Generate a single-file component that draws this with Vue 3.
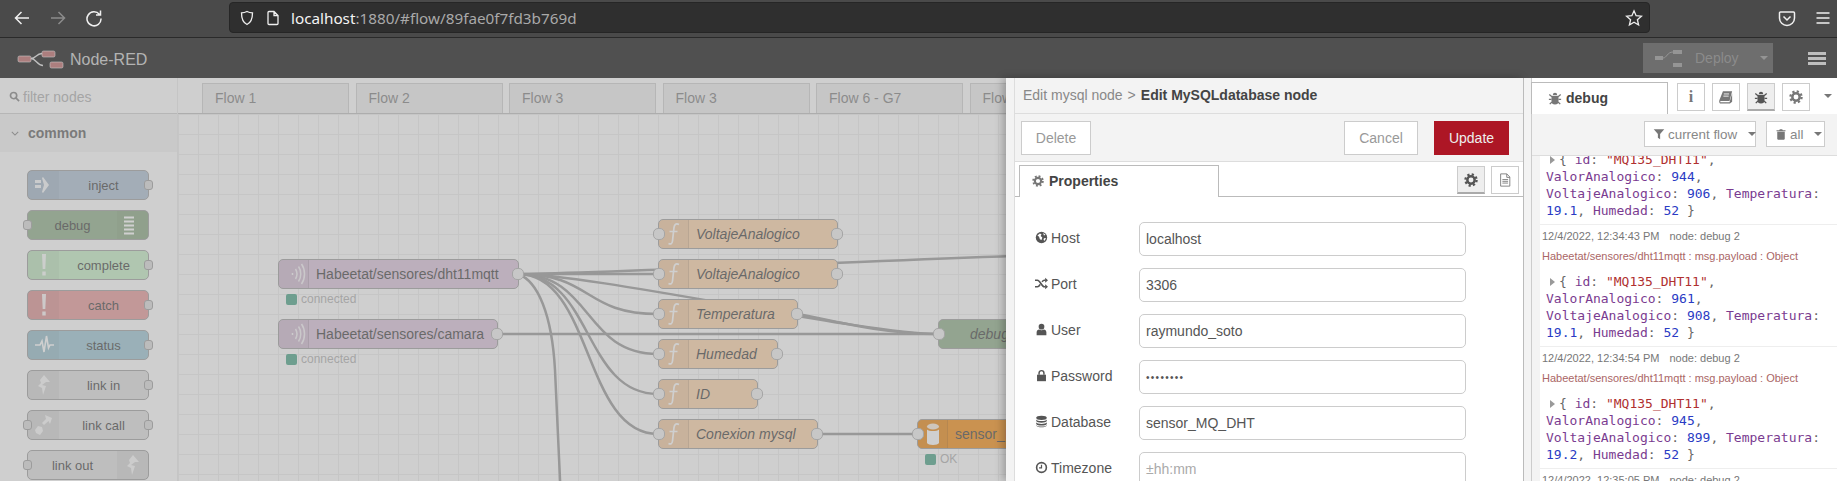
<script setup>
const OX = 178
const OY = 114

const paletteNodes = [
  { label: 'inject', color: '#a6bbcf', icon: 'inject', out: true },
  { label: 'debug', color: '#87a980', icon: 'lines', input: true, right: true },
  { label: 'complete', color: '#c0edc0', icon: 'bang', out: true },
  { label: 'catch', color: '#e49191', icon: 'bang', out: true },
  { label: 'status', color: '#94c1d0', icon: 'pulse', out: true },
  { label: 'link in', color: '#dddddd', icon: 'link', out: true },
  { label: 'link call', color: '#dddddd', icon: 'linkcall', input: true, out: true },
  { label: 'link out', color: '#dddddd', icon: 'link', input: true, right: true }
]

const flowTabs = ['Flow 1', 'Flow 2', 'Flow 3', 'Flow 3', 'Flow 6 - G7', 'Flow']

const fn = '#fdd0a2'
const mq = '#d8bfd8'
const canvasNodes = [
  { label: 'Habeetat/sensores/dht11mqtt', x: 278, y: 259, w: 241, color: mq, icon: 'wave', out: true, status: 'connected' },
  { label: 'Habeetat/sensores/camara', x: 278, y: 319, w: 220, color: mq, icon: 'wave', out: true, status: 'connected' },
  { label: 'VoltajeAnalogico', x: 658, y: 219, w: 180, color: fn, icon: 'fn', input: true, out: true, italic: true },
  { label: 'VoltajeAnalogico', x: 658, y: 259, w: 180, color: fn, icon: 'fn', input: true, out: true, italic: true },
  { label: 'Temperatura', x: 658, y: 299, w: 140, color: fn, icon: 'fn', input: true, out: true, italic: true },
  { label: 'Humedad', x: 658, y: 339, w: 120, color: fn, icon: 'fn', input: true, out: true, italic: true },
  { label: 'ID', x: 658, y: 379, w: 100, color: fn, icon: 'fn', input: true, out: true, italic: true },
  { label: 'Conexion mysql', x: 658, y: 419, w: 160, color: fn, icon: 'fn', input: true, out: true, italic: true },
  { label: 'debug 2', x: 938, y: 319, w: 140, color: '#87a980', input: true, italic: true, textLeft: 31 },
  { label: 'sensor_MQ_DHT', x: 917, y: 419, w: 180, color: '#f58500', icon: 'db', input: true, status: 'OK' }
]

const wire = (x1, y1, x2, y2) => {
  const a = [x1 - OX, y1 - OY]
  const b = [x2 - OX, y2 - OY]
  return `M${a[0]} ${a[1]} C${a[0] + 75} ${a[1]} ${b[0] - 75} ${b[1]} ${b[0]} ${b[1]}`
}
const rel = (pts) => pts.map(([x, y]) => `${x - OX} ${y - OY}`)
const [t0, t1, t2, t3] = rel([[798, 314], [830, 320], [880, 334], [938, 334]])
const [v0, v1, v2, v3, v4, v5, v6] = rel([[518, 274], [538, 281], [552, 315], [555, 370], [557, 410], [559, 450], [560.5, 490]])
const wires = [
  wire(518, 274, 658, 274),
  wire(518, 274, 658, 314),
  wire(518, 274, 658, 354),
  wire(518, 274, 658, 394),
  wire(518, 274, 658, 434),
  wire(518, 274, 938, 334),
  wire(498, 334, 938, 334),
  `M${t0} C${t1} ${t2} ${t3}`,
  wire(518, 274, 1200, 250),
  wire(818, 434, 917, 434),
  `M${v0} C${v1} ${v2} ${v3} C${v4} ${v5} ${v6}`
]

const formRows = [
  { label: 'Host', icon: 'globe', value: 'localhost' },
  { label: 'Port', icon: 'random', value: '3306' },
  { label: 'User', icon: 'user', value: 'raymundo_soto' },
  { label: 'Password', icon: 'lock', value: '••••••••', password: true },
  { label: 'Database', icon: 'database', value: 'sensor_MQ_DHT' },
  { label: 'Timezone', icon: 'clock', value: '±hh:mm', placeholder: true }
]

const messages = [
  { time: '12/4/2022, 12:34:43 PM', val: 961, volt: 908, temp: '19.1' },
  { time: '12/4/2022, 12:34:54 PM', val: 945, volt: 899, temp: '19.2' }
]
</script>

<template>
  <div class="page">
    <svg class="sprite" aria-hidden="true">
      <symbol id="i-gear" viewBox="0 0 16 16">
        <circle cx="8" cy="8" r="4.2" fill="none" stroke="currentColor" stroke-width="2.8" />
        <circle cx="8" cy="8" r="6.4" fill="none" stroke="currentColor" stroke-width="2.6" stroke-dasharray="2.5 2.53" />
      </symbol>
      <symbol id="i-bug" viewBox="0 0 16 16">
        <path d="M5 5.5h6l1 1v5a4 4 0 0 1-8 0v-5z M5.5 4.5a2.5 2.5 0 0 1 5 0z" fill="currentColor" />
        <path d="M1.5 4 4.5 6.5M14.5 4l-3 2.5M1 9.5h3M15 9.5h-3M2 15l2.5-2.5M14 15l-2.5-2.5" stroke="currentColor" stroke-width="1.5" fill="none" />
      </symbol>
      <symbol id="i-book" viewBox="0 0 16 16">
        <path d="M4.5 1.5H15l-3 11H2.5C1.3 12.5 1 13 1.500 14h10.500L15 4v9.500L12.500 15.500H2C.5 15.500-.2 13.500.5 11.500z" fill="currentColor" />
        <path d="M5.500 4.500h6M5 7h6" stroke="#fff" stroke-width="1" />
      </symbol>
      <symbol id="i-doc" viewBox="0 0 16 16">
        <path d="M3 1h7l3.500 3.500V15H3zM10 1v4h3.500M5 7.500h6.500M5 9.500h6.500M5 11.500h6.500" fill="none" stroke="currentColor" stroke-width="1" />
      </symbol>
      <symbol id="i-filter" viewBox="0 0 16 16">
        <path d="M1 1.500h14L9.500 8v7l-3-2V8z" fill="currentColor" />
      </symbol>
      <symbol id="i-trash" viewBox="0 0 16 16">
        <path d="M3 5h10v9.500l-1 1H4l-1-1zM2 3h3.500l1-1.500h3L10.500 3H14v1.300H2z" fill="currentColor" />
      </symbol>
      <symbol id="i-globe" viewBox="0 0 16 16">
        <circle cx="8" cy="8" r="7" fill="currentColor" />
        <path d="M3 5.500 6 3l2 1-1 2 2 2-1 3-2-1-1-3zM10 2.500l3 2-2 1zM11 9l2.500-.5-1.500 3.500-1.500-1z" fill="#fff" />
      </symbol>
      <symbol id="i-random" viewBox="0 0 16 16">
        <path d="M0 4h3c3.500 0 5 8 8.500 8H13M0 12h3c1.400 0 2.400-1.300 3.300-2.800M8.700 6C9.500 4.900 10.400 4 11.500 4H13" fill="none" stroke="currentColor" stroke-width="2" />
        <path d="M12.500 1 16 4l-3.500 3zM12.500 9 16 12l-3.500 3z" fill="currentColor" />
      </symbol>
      <symbol id="i-user" viewBox="0 0 16 16">
        <circle cx="8" cy="4.500" r="3.500" fill="currentColor" />
        <path d="M2 15v-3.500C2 9.500 3.500 8 5 8c1.800 1.300 4.200 1.300 6 0 1.500 0 3 1.500 3 3.500V15z" fill="currentColor" />
      </symbol>
      <symbol id="i-lock" viewBox="0 0 16 16">
        <path d="M2.500 7h11v8h-11z" fill="currentColor" />
        <path d="M5 7V5a3 3 0 0 1 6 0v2" fill="none" stroke="currentColor" stroke-width="1.800" />
      </symbol>
      <symbol id="i-database" viewBox="0 0 16 16">
        <ellipse cx="8" cy="3.500" rx="6.500" ry="2.700" fill="currentColor" />
        <path d="M1.500 5.500c1 2.600 12 2.600 13 0v2c-1 2.600-12 2.600-13 0zM1.500 9c1 2.600 12 2.600 13 0v2c-1 2.600-12 2.600-13 0zM1.500 12.300c1 2.600 12 2.600 13 0v.7c-1 2.900-12 2.900-13 0z" fill="currentColor" />
      </symbol>
      <symbol id="i-clock" viewBox="0 0 16 16">
        <circle cx="8" cy="8" r="6" fill="none" stroke="currentColor" stroke-width="2" />
        <path d="M8 4.500V8.500H5" fill="none" stroke="currentColor" stroke-width="1.500" />
      </symbol>
      <symbol id="i-wave" viewBox="0 0 30 30">
        <path d="M16.500 10c1.800 3 1.800 7 0 10M19.500 7.500c3 4 3 11 0 15M22.500 5c4 5.500 4 14.500 0 20" fill="none" stroke="#fff" stroke-width="1.500" opacity=".8" />
        <circle cx="13.500" cy="15" r="0.900" fill="#fff" />
      </symbol>
      <symbol id="i-fn" viewBox="0 0 30 30">
        <path d="M20 5.500c-3-1.500-4.500 0-5 3L13.500 22c-.4 3-1.800 3.500-4 2.500M10.500 12.500h8" fill="none" stroke="#fff" stroke-width="1.700" />
      </symbol>
      <symbol id="i-db" viewBox="0 0 30 30">
        <ellipse cx="15" cy="7.500" rx="6" ry="3" fill="#fff" opacity=".85" />
        <path d="M9 10.500c2 2 10 2 12 0V24c-1 2.500-11 2.500-12 0z" fill="#fff" />
      </symbol>
      <symbol id="i-inject" viewBox="0 0 30 30">
        <path d="M6 10h6v3H6zM6 15h6v3H6zM14 7l6 8-6 8-1-1 2-7-2-7z" fill="#fff" opacity=".9" />
      </symbol>
      <symbol id="i-lines" viewBox="0 0 30 30">
        <path d="M6 7.500h10M6 11.500h10M6 15.500h10M6 19.500h10M6 23.500h10" stroke="#fff" stroke-width="2" />
      </symbol>
      <symbol id="i-bang" viewBox="0 0 30 30">
        <path d="M13 4h4l-.7 15h-2.600zM13.300 21.500h3.400v4h-3.400z" fill="#fff" opacity=".9" />
      </symbol>
      <symbol id="i-pulse" viewBox="0 0 30 30">
        <path d="M6 15h5l2-4 2 11 2.500-16L19.500 18 21 15h4" fill="none" stroke="#fff" stroke-width="1.600" />
      </symbol>
      <symbol id="i-link" viewBox="0 0 30 30">
        <path d="M15 5l6 7h-4l-4 3 4 1-3 9-1-7-4-2 3-3-1-3z" fill="#fff" opacity=".85" />
      </symbol>
      <symbol id="i-linkcall" viewBox="0 0 30 30">
        <path d="M16 5l7 3-2 6-1.500-3L15 15l-2-2 4-4zM9 16l4 1 1 4-3 4-4-2-1-3z" fill="#fff" opacity=".85" />
      </symbol>
    </svg>

    <div class="chrome">
      <div class="chrome-nav">
        <svg class="nav-icon" viewBox="0 0 18 18"><path d="M16 9H2.500M8.500 3 2.500 9l6 6" /></svg>
        <svg class="nav-icon off" viewBox="0 0 18 18"><path d="M2 9h13.500M9.500 3l6 6-6 6" /></svg>
        <svg class="nav-icon" viewBox="0 0 18 18"><path d="M14.500 5.500A7 7 0 1 0 16 9.500M15.500 1.500v4.500H11" /></svg>
      </div>
      <div class="urlbar">
        <svg class="url-icon" viewBox="0 0 16 16"><path d="M8 1.500c2 1 3.500 1.300 5.500 1.300 0 6-1 9.700-5.500 11.700C3.500 12.500 2.500 8.800 2.500 2.800c2 0 3.500-.3 5.500-1.300z" /></svg>
        <svg class="url-icon" viewBox="0 0 16 16"><path d="M3 2.500a1 1 0 0 1 1-1h5l4 4v8a1 1 0 0 1-1 1H4a1 1 0 0 1-1-1zM9 1.500v4h4" /></svg>
        <span class="url-text"><b>localhost</b>:1880/#flow/89fae0f7fd3b769d</span>
        <svg class="url-star" viewBox="0 0 18 18"><path d="M9 1.800 11.100 6.700 16.400 7.200 12.400 10.700 13.600 16 9 13.200 4.400 16 5.600 10.700 1.600 7.200 6.900 6.700z" /></svg>
      </div>
      <div class="chrome-end">
        <svg class="nav-icon" viewBox="0 0 18 18"><path d="M2.500 3h13a1 1 0 0 1 1 1v5a7.500 7.500 0 0 1-15 0V4a1 1 0 0 1 1-1zM5.500 7.500 9 11l3.500-3.500" /></svg>
        <svg class="nav-icon" viewBox="0 0 18 18"><path d="M2.500 4h13M2.500 9h13M2.500 14h13" /></svg>
      </div>
    </div>

    <div class="app">
      <header class="nr-header">
        <svg class="logo" viewBox="0 0 50 20">
          <path d="M14 8.500c5 0 5-5 11-5M14 8.500c5 0 6 7 12 7" fill="none" stroke="#ddd" stroke-width="1.300" />
          <rect x="1" y="6" width="13" height="6" rx="1.500" fill="#b85c5c" stroke="#eee" stroke-width=".6" />
          <rect x="25" y="1" width="13" height="6" rx="1.500" fill="#b85c5c" stroke="#eee" stroke-width=".6" />
          <rect x="33" y="12" width="13" height="6" rx="1.500" fill="#b85c5c" stroke="#eee" stroke-width=".6" />
        </svg>
        <span class="brand">Node-RED</span>
        <div class="deploy">
          <svg class="deploy-icon" viewBox="0 0 32 20"><path d="M0 8h8v4H0zM18 2h9v4h-9zM18 15h9v4h-9z" fill="#8a8a8a" /><path d="M8 10c4 0 4-6 10-6" fill="none" stroke="#8a8a8a" /></svg>
          <span class="deploy-text">Deploy</span>
          <span class="caret deploy-caret"></span>
        </div>
        <div class="burger"><i></i><i></i><i></i></div>
        <div class="shade"></div>
      </header>

      <div class="main">
        <aside class="palette">
          <div class="filter">
            <svg class="filter-icon" viewBox="0 0 12 12"><circle cx="5" cy="5" r="3.400" /><path d="M7.500 7.500 11 11" /></svg>
            <span>filter nodes</span>
          </div>
          <div class="category">
            <svg class="chev" viewBox="0 0 10 6"><path d="M1 1l4 4 4-4" /></svg>
            <span>common</span>
          </div>
          <div class="palette-list">
            <div
              v-for="n in paletteNodes"
              :key="n.label"
              class="pnode"
              :class="{ flip: n.right }"
              :style="{ background: n.color }"
            >
              <span class="pnode-icon"><svg class="nicon"><use :href="'#i-' + n.icon" /></svg></span>
              <span class="pnode-label">{{ n.label }}</span>
              <span v-if="n.input" class="pport pin"></span>
              <span v-if="n.out" class="pport pout"></span>
            </div>
          </div>
        </aside>

        <section class="workspace">
          <div class="flow-tabs">
            <div v-for="(t, i) in flowTabs" :key="i" class="flow-tab">{{ t }}</div>
          </div>
          <div class="canvas">
            <svg class="wires">
              <path v-for="(d, i) in wires" :key="i" :d="d" />
            </svg>
            <div
              v-for="(n, i) in canvasNodes"
              :key="i"
              class="cnode"
              :style="{ left: n.x - OX + 'px', top: n.y - OY + 'px', width: n.w + 'px', background: n.color }"
            >
              <span v-if="n.icon" class="cnode-icon"><svg class="nicon"><use :href="'#i-' + n.icon" /></svg></span>
              <span class="cnode-label" :class="{ it: n.italic }" :style="n.textLeft ? { paddingLeft: n.textLeft + 'px' } : null">{{ n.label }}</span>
              <span v-if="n.input" class="cport cin"></span>
              <span v-if="n.out" class="cport cout"></span>
              <span v-if="n.status" class="cstatus"><i></i>{{ n.status }}</span>
            </div>
          </div>
        </section>
        <div class="shade main-shade"></div>

        <div class="tray">
          <div class="tray-handle"></div>
          <div class="tray-body">
            <div class="tray-title">Edit mysql node<span class="crumb">&gt;</span><b>Edit MySQLdatabase node</b></div>
            <div class="tray-toolbar">
              <button class="btn">Delete</button>
              <span class="grow"></span>
              <button class="btn">Cancel</button>
              <button class="btn primary">Update</button>
            </div>
            <div class="tray-tabs">
              <div class="tray-tab">
                <svg class="ic"><use href="#i-gear" /></svg>
                <span>Properties</span>
              </div>
              <span class="grow"></span>
              <div class="sq active small"><svg class="ic"><use href="#i-gear" /></svg></div>
              <div class="sq small"><svg class="ic"><use href="#i-doc" /></svg></div>
            </div>
            <div class="form">
              <div v-for="r in formRows" :key="r.label" class="form-row">
                <label class="form-label"><svg class="ic fi"><use :href="'#i-' + r.icon" /></svg>{{ r.label }}</label>
                <div class="input" :class="{ ph: r.placeholder, pw: r.password }">{{ r.value }}</div>
              </div>
            </div>
          </div>
        </div>

        <aside class="sidebar">
          <div class="side-handle"></div>
          <div class="side-body">
            <div class="side-tabs">
              <div class="side-tab">
                <svg class="ic"><use href="#i-bug" /></svg>
                <span>debug</span>
              </div>
              <span class="grow"></span>
              <div class="sq info">i</div>
              <div class="sq"><svg class="ic"><use href="#i-book" /></svg></div>
              <div class="sq active"><svg class="ic"><use href="#i-bug" /></svg></div>
              <div class="sq"><svg class="ic"><use href="#i-gear" /></svg></div>
              <span class="caret side-caret"></span>
            </div>
            <div class="side-toolbar">
              <div class="tool-btn wide">
                <svg class="ic"><use href="#i-filter" /></svg>
                <span>current flow</span>
                <span class="caret"></span>
              </div>
              <div class="tool-btn narrow">
                <svg class="ic"><use href="#i-trash" /></svg>
                <span>all</span>
                <span class="caret"></span>
              </div>
            </div>
            <div class="messages">
              <div class="msg first">
                <div class="json"><span class="tw"></span>{ <span class="k">id</span>: <span class="s">"MQ135_DHT11"</span>,<br /><span class="k">ValorAnalogico</span>: <span class="n">944</span>,<br /><span class="k">VoltajeAnalogico</span>: <span class="n">906</span>, <span class="k">Temperatura</span>:<br /><span class="n">19.1</span>, <span class="k">Humedad</span>: <span class="n">52</span> }</div>
              </div>
              <div v-for="m in messages" :key="m.time" class="msg">
                <div class="meta"><span class="time">{{ m.time }}</span><span>node: debug 2</span></div>
                <div class="topic">Habeetat/sensores/dht11mqtt : msg.payload : Object</div>
                <div class="json"><span class="tw"></span>{ <span class="k">id</span>: <span class="s">"MQ135_DHT11"</span>,<br /><span class="k">ValorAnalogico</span>: <span class="n">{{ m.val }}</span>,<br /><span class="k">VoltajeAnalogico</span>: <span class="n">{{ m.volt }}</span>, <span class="k">Temperatura</span>:<br /><span class="n">{{ m.temp }}</span>, <span class="k">Humedad</span>: <span class="n">52</span> }</div>
              </div>
              <div class="msg">
                <div class="meta"><span class="time">12/4/2022, 12:35:05 PM</span><span>node: debug 2</span></div>
              </div>
            </div>
          </div>
        </aside>
      </div>
    </div>
  </div>
</template>

<style>
html, body { margin: 0; padding: 0; overflow: hidden; }
</style>

<style scoped>
.page {
  width: 1837px;
  height: 481px;
  overflow: hidden;
  display: flex;
  flex-direction: column;
  font-family: "Liberation Sans", Arial, sans-serif;
  font-size: 14px;
  color: #555;
}
.sprite { display: none; }
.grow { flex: 1; }

/* browser chrome */
.chrome {
  height: 38px;
  flex: none;
  box-sizing: border-box;
  background: #4a4a4a;
  border-bottom: 1px solid #2a2a2a;
  display: flex;
  align-items: center;
  padding-bottom: 2px;
}
.chrome-nav { display: flex; gap: 18px; width: 229px; padding-left: 13px; box-sizing: border-box; flex: none; }
.nav-icon { width: 18px; height: 18px; fill: none; stroke: #f0f0f0; stroke-width: 1.500; flex: none; }
.nav-icon.off { stroke: #8c8c8c; }
.urlbar {
  width: 1421px;
  height: 31px;
  box-sizing: border-box;
  background: #2f2f2f;
  border: 1px solid #262626;
  border-radius: 4px;
  display: flex;
  align-items: center;
  padding: 0 6px 0 4px;
  flex: none;
}
.url-icon { width: 16px; height: 16px; fill: none; stroke: #f0f0f0; stroke-width: 1.300; margin: 0 5px; flex: none; }
.url-text {
  flex: 1;
  margin-left: 5px;
  font-family: "Noto Sans", sans-serif;
  font-size: 15.250px;
  color: #a9a9a9;
  white-space: nowrap;
}
.url-text b { font-weight: 400; color: #f4f4f4; }
.url-star { width: 18px; height: 18px; fill: none; stroke: #eee; stroke-width: 1.300; flex: none; }
.chrome-end { display: flex; gap: 18px; margin-left: 128px; }

/* app */
.app { flex: 1; min-height: 0; display: flex; flex-direction: column; position: relative; }
.shade { position: absolute; inset: 0; background: rgba(160, 160, 160, .5); pointer-events: none; z-index: 5; }
.nr-header {
  position: relative;
  height: 40px;
  flex: none;
  background: #000;
  display: flex;
  align-items: center;
  padding: 4px 0 0 17px;
  box-sizing: border-box;
}
.logo { width: 50px; height: 20px; flex: none; }
.brand { margin-left: 3px; font-size: 16px; color: #c7c7c7; }
.deploy {
  position: absolute;
  left: 1643px;
  top: 5px;
  width: 130px;
  height: 30px;
  background: #3c3c3c;
  display: flex;
  align-items: center;
  padding-left: 12px;
  box-sizing: border-box;
}
.deploy-icon { width: 32px; height: 20px; flex: none; }
.deploy-text { margin-left: 8px; font-size: 14px; color: #777; }
.deploy-caret { margin-left: 21px; border-top-color: #888 !important; }
.burger { position: absolute; left: 1808px; top: 14px; width: 18px; display: flex; flex-direction: column; gap: 2px; }
.burger i { height: 3px; background: #ddd; display: block; }

.main { flex: 1; min-height: 0; display: flex; position: relative; }

.palette {
  width: 178px;
  flex: none;
  box-sizing: border-box;
  background: #fff;
  border-right: 1px solid #eaeaea;
  display: flex;
  flex-direction: column;
}
.filter {
  height: 36px;
  flex: none;
  box-sizing: border-box;
  border-bottom: 1px solid #ccc;
  display: flex;
  align-items: center;
  padding: 2px 0 0 9px;
  color: #aaa;
  gap: 3px;
}
.filter-icon { width: 11px; height: 11px; fill: none; stroke: #777; stroke-width: 1.800; }
.category {
  height: 38px;
  flex: none;
  background: #f3f3f3;
  display: flex;
  align-items: center;
  padding-left: 11px;
  gap: 9px;
  font-weight: 700;
  color: #555;
}
.chev { width: 8px; height: 5px; fill: none; stroke: #777; stroke-width: 1.300; }
.palette-list {
  padding: 18px 0 0 27px;
  display: flex;
  flex-direction: column;
  gap: 10px;
}
.pnode {
  position: relative;
  width: 122px;
  height: 30px;
  flex: none;
  box-sizing: border-box;
  border: 1px solid #999;
  border-radius: 5px;
  display: flex;
  align-items: center;
  font-size: 13px;
  color: #333;
}
.pnode.flip { flex-direction: row-reverse; }
.pnode-icon {
  width: 31px;
  height: 100%;
  flex: none;
  background: rgba(0, 0, 0, .05);
  display: flex;
  align-items: center;
  justify-content: center;
}
.nicon { width: 30px; height: 30px; display: block; flex: none; }
.pnode-label { flex: 1; text-align: center; }
.pport {
  position: absolute;
  top: 9px;
  width: 9px;
  height: 10px;
  box-sizing: border-box;
  background: #d9d9d9;
  border: 1px solid #999;
  border-radius: 3px;
}
.pin { left: -5px; }
.pout { right: -5px; }

.workspace { flex: 1; min-width: 0; display: flex; flex-direction: column; background: #fff; }
.flow-tabs {
  height: 36px;
  flex: none;
  box-sizing: border-box;
  background: #fff;
  border-bottom: 1px solid #bbb;
  padding: 5px 0 0 24px;
  display: flex;
  gap: 6.500px;
  overflow: hidden;
}
.flow-tab {
  width: 147px;
  flex: none;
  box-sizing: border-box;
  background: #ededed;
  border: 1px solid #ccc;
  border-bottom: none;
  padding: 6px 0 0 12px;
  color: #777;
}
.canvas {
  position: relative;
  flex: 1;
  min-height: 0;
  overflow: hidden;
  background-color: #fff;
  background-image:
    linear-gradient(to right, #ececec 1px, transparent 1px),
    linear-gradient(to bottom, #ececec 1px, transparent 1px);
  background-size: 20px 20px;
  background-position: 0 0;
}
.wires { position: absolute; left: 0; top: 0; width: 100%; height: 100%; overflow: visible; }
.wires path { fill: none; stroke: #909090; stroke-width: 2.500; }
.cnode {
  position: absolute;
  height: 30px;
  box-sizing: border-box;
  border: 1px solid #999;
  border-radius: 5px;
  display: flex;
  align-items: center;
  color: #333;
}
.cnode-icon {
  width: 29px;
  height: 100%;
  flex: none;
  background: rgba(0, 0, 0, .05);
  border-right: 1px solid rgba(0, 0, 0, .12);
  border-radius: 4px 0 0 4px;
  display: flex;
  align-items: center;
  justify-content: center;
  overflow: hidden;
}
.cnode-label { padding-left: 7px; white-space: nowrap; }
.cnode-label.it { font-style: italic; }
.cport {
  position: absolute;
  top: 8px;
  width: 12px;
  height: 12px;
  box-sizing: border-box;
  background: #eeeeee;
  border: 1px solid #aaa;
  border-radius: 5px;
}
.cin { left: -6px; }
.cout { right: -6px; }
.cstatus {
  position: absolute;
  left: 7px;
  top: 32px;
  display: flex;
  align-items: center;
  gap: 4px;
  font-size: 12px;
  color: #aaa;
  white-space: nowrap;
}
.cstatus i {
  width: 11px;
  height: 11px;
  border-radius: 2px;
  background: #3d9d7e;
  display: block;
}

.main-shade { right: 313px; }

/* tray */
.tray {
  position: absolute;
  left: 1006px;
  top: 0;
  width: 518px;
  bottom: 0;
  z-index: 10;
  display: flex;
  background: #f3f3f3;
  box-shadow: -3px 0 8px rgba(0, 0, 0, .25);
}
.tray-handle { width: 8px; flex: none; background: #f3f3f3; border-right: 1px solid #ddd; }
.tray-body { flex: 1; min-width: 0; background: #fff; display: flex; flex-direction: column; border-right: 1px solid #bbb; }
.tray-title {
  height: 36px;
  flex: none;
  box-sizing: border-box;
  background: #f3f3f3;
  border-bottom: 1px solid #ddd;
  padding-left: 8px;
  line-height: 35px;
  color: #888;
  white-space: nowrap;
}
.crumb { margin: 0 5px; }
.tray-title b { color: #444; }
.tray-toolbar {
  height: 48px;
  flex: none;
  box-sizing: border-box;
  background: #f3f3f3;
  border-bottom: 1px solid #ddd;
  display: flex;
  align-items: center;
  padding: 0 14px 1px 6px;
}
.btn {
  height: 34px;
  box-sizing: border-box;
  font: inherit;
  color: #999;
  background: #fff;
  border: 1px solid #ccc;
  padding: 0;
  width: 70px;
  margin-top: 1px;
}
.btn + .grow + .btn { width: 74px; margin-right: 16px; }
.btn.primary { width: 75px; background: #ad1625; border-color: #ad1625; color: #eee; }
.tray-tabs {
  height: 35px;
  flex: none;
  box-sizing: border-box;
  background: #fff;
  border-bottom: 1px solid #bbb;
  display: flex;
  align-items: flex-end;
  padding: 0 4px 0 4px;
}
.tray-tab {
  width: 200px;
  height: 32px;
  flex: none;
  box-sizing: border-box;
  background: #fff;
  border: 1px solid #bbb;
  border-bottom: none;
  margin-bottom: -1px;
  padding: 0 0 1px 12px;
  display: flex;
  align-items: center;
  gap: 5px;
  font-weight: 700;
  color: #444;
}
.tray-tab .ic { width: 12px; height: 12px; }
.ic { width: 14px; height: 14px; flex: none; display: block; color: #777; }
.sq {
  width: 28px;
  height: 28px;
  flex: none;
  box-sizing: border-box;
  background: #fff;
  border: 1px solid #ccc;
  display: flex;
  align-items: center;
  justify-content: center;
  margin-left: 6px;
  color: #777;
}
.sq.small { margin-bottom: 2px; }
.sq.active { background: #eee; border-bottom: 2px solid #aaa; }
.sq.active .ic { color: #555; }
.info { font-family: "Liberation Serif", serif; font-weight: 700; font-size: 16px; }

.form { padding: 25px 0 0 20px; display: flex; flex-direction: column; gap: 12px; }
.form-row { display: flex; align-items: center; height: 34px; flex: none; }
.form-label { width: 104px; flex: none; display: flex; align-items: center; gap: 3px; color: #555; margin-top: -3px; }
.fi { width: 13px; height: 13px; color: #555; }
.input {
  width: 327px;
  height: 34px;
  flex: none;
  box-sizing: border-box;
  background: #fff;
  border: 1px solid #ccc;
  border-radius: 5px;
  padding: 0 6px;
  line-height: 33px;
  color: #555;
}
.input.ph { color: #aaa; }
.input.pw { font-size: 10px; letter-spacing: 1.300px; }

/* sidebar */
.sidebar { position: absolute; left: 1524px; top: 0; bottom: 0; width: 313px; display: flex; background: #f3f3f3; z-index: 11; }
.side-handle { width: 8px; flex: none; background: #f3f3f3; border-right: 1px solid #ccc; box-sizing: border-box; }
.side-body { flex: 1; min-width: 0; display: flex; flex-direction: column; }
.side-tabs {
  height: 36px;
  flex: none;
  box-sizing: border-box;
  background: #fff;
  display: flex;
  align-items: flex-start;
  padding-top: 5px;
  position: relative;
}
.side-tab {
  width: 137px;
  height: 32px;
  flex: none;
  box-sizing: border-box;
  margin-top: -1px;
  margin-left: -1px;
  border: 1px solid #bbb;
  border-bottom: none;
  background: #fff;
  display: flex;
  align-items: center;
  padding: 0 0 1px 16px;
  gap: 4px;
  font-weight: 700;
  color: #444;
  font-size: 14px;
}
.side-tabs .sq { margin-left: 7px; margin-top: 0; }
.side-tabs .sq:nth-child(3) { margin-left: 0; }
.side-caret { margin: 11px 5px 0 14px; }
.side-toolbar {
  height: 42px;
  flex: none;
  box-sizing: border-box;
  background: #f3f3f3;
  border-bottom: 1px solid #ddd;
  display: flex;
  align-items: center;
  justify-content: flex-end;
  padding: 0 12px 1px 0;
  gap: 10px;
}
.tool-btn {
  height: 26px;
  box-sizing: border-box;
  background: #fff;
  border: 1px solid #ccc;
  display: flex;
  align-items: center;
  color: #888;
  gap: 3px;
  flex: none;
  padding-left: 8px;
  font-size: 13.400px;
  white-space: nowrap;
}
.tool-btn .ic { width: 12px; height: 12px; }
.tool-btn .caret { margin-left: 8px; }
.wide { width: 112px; }
.narrow { width: 59px; }
.caret {
  display: inline-block;
  width: 0;
  height: 0;
  border-left: 4px solid transparent;
  border-right: 4px solid transparent;
  border-top: 4px solid #777;
  flex: none;
}
.messages { flex: 1; min-height: 0; overflow: hidden; background: #fff; margin-left: 0; border-left: 8px solid #f3f3f3; }
.msg { border-bottom: 1px solid #eee; padding: 1px 0 5px 3px; }
.msg.first { margin-top: -5px; padding-top: 0; }
.meta { height: 20px; line-height: 20px; font-size: 11px; color: #777; white-space: nowrap; margin-left: -1px; }
.time { margin-right: 10px; }
.topic { height: 20px; line-height: 20px; font-size: 11px; color: #a66; white-space: nowrap; margin: 0 0 7px -1px; }
.json {
  font-family: "DejaVu Sans Mono", monospace;
  font-size: 13px;
  line-height: 17px;
  color: #666;
  padding-left: 3px;
  white-space: nowrap;
}
.tw {
  display: inline-block;
  width: 0;
  height: 0;
  border-top: 4px solid transparent;
  border-bottom: 4px solid transparent;
  border-left: 5px solid #999;
  margin: 0 4px 0 4px;
}
.k { color: #7a3b90; }
.s { color: #b03030; }
.n { color: #2a3bc4; }
</style>
